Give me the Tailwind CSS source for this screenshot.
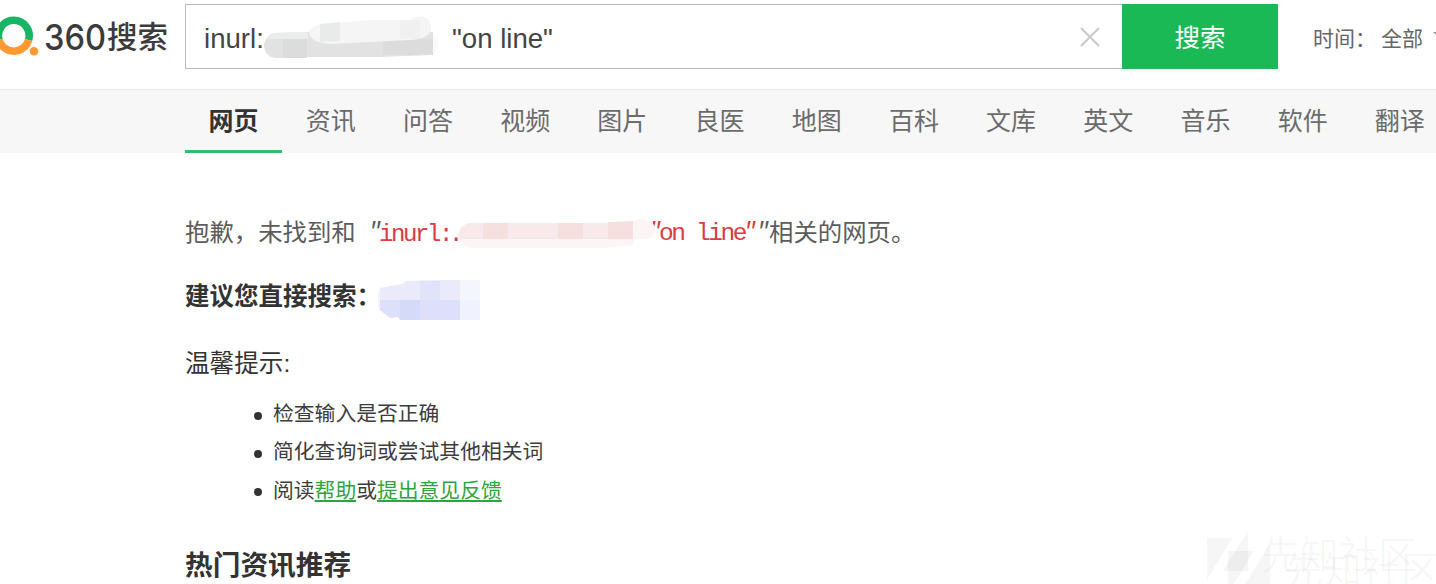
<!DOCTYPE html>
<html lang="zh-CN">
<head>
<meta charset="utf-8">
<title>360搜索</title>
<script src="https://cdn.jsdelivr.net/npm/@tailwindcss/browser@4"></script>
</head>
<body class="relative h-[584px] w-[1436px] overflow-hidden bg-white font-['Liberation_Sans','Noto_Sans_CJK_SC',sans-serif] text-[#333]">
<header class="flex h-[89px] pt-1">
  <a class="block h-[65px] w-[185px] shrink-0">
    <svg width="185" height="65" viewBox="0 4 185 65">
      <path d="M-1 40A15.4 15.4 0 1 1 28.6 40" fill="none" stroke="#19b566" stroke-width="7.5"/>
      <path d="M-1 40A15.4 15.4 0 0 0 28.6 40" fill="none" stroke="#ff9a33" stroke-width="7.5"/>
      <circle cx="34" cy="51.3" r="4.3" fill="#ff9a33"/>
      <text x="44" y="50" font-family="Inter" font-size="35" font-weight="500" textLength="62" lengthAdjust="spacingAndGlyphs" fill="#3b3b3b">360</text>
      <text x="107" y="48" font-family="Noto Sans CJK SC" font-size="30.5" font-weight="500" textLength="61" fill="#3b3b3b">搜索</text>
    </svg>
  </a>
  <div class="flex h-[65px] w-[937px] shrink-0 items-center border border-r-0 border-[#bbb] pl-[18px] text-[27.6px] leading-[65px] text-[#444]">
    <span class="w-[60px] whitespace-nowrap pt-1">inurl:</span>
    <svg class="shrink-0" width="180" height="63" viewBox="264 5 180 63">
      <path d="M264 44Q267 34 275 33L308 32H433V55L380 57L305 57L302 58H275Q264 56 264 44Z" fill="#e2e2e2"/>
      <path d="M283 39H307V58H283ZM383 39H433V55H383Z" fill="#dcdcdc"/>
      <path d="M275 33L308 32V39H267Q270 34 275 33Z" fill="#ebecec"/>
      <path d="M309 33Q312 25 323 24L373 20L410 20Q420 13 428 19Q434 25 429 34Q421 40 410 40L330 44Q311 43 309 33Z" fill="#f5f5f5"/>
      <path d="M320 24L340 22V41L320 42Z" fill="#e9ebea"/>
      <path d="M400 20H420V39H400Z" fill="#f0f0f0"/>
      <path d="M433 33L438 40Q439 50 433 54Z" fill="#fafafa"/>
    </svg>
    <span class="ml-[8px] whitespace-nowrap pt-1">"on line"</span>
    <svg class="ml-auto mr-[22px]" width="20" height="20" viewBox="0 0 20 20"><path d="M1 1L19 19M19 1L1 19" stroke="#c8c8c8" stroke-width="1.9"/></svg>
  </div>
  <button class="h-[65px] w-[156px] shrink-0 bg-[#1bb955] pt-1 text-[25.5px] text-white">搜索</button>
  <div class="flex h-[65px] shrink-0 items-center pl-[35px] pt-[2px] font-['Noto_Sans_CJK_SC',sans-serif] text-[21px] text-[#666]">
    <span class="w-[68px] whitespace-nowrap">时间：</span><span class="w-[52px]">全部</span>
    <svg class="mb-1 shrink-0" width="12" height="7"><path d="M0 0H12L6 6Z" fill="#999"/></svg>
  </div>
</header>
<nav class="flex h-16 border-t border-[#e9e9e9] bg-[#f7f7f7] pl-[185px] text-center text-[25px] leading-[62px] text-[#6b6b6b] [&>a]:w-[97.2px] [&>a]:shrink-0">
  <a class="border-b-[3px] border-[#30c069] font-bold text-[#333]">网页</a><a>资讯</a><a>问答</a><a>视频</a><a>图片</a><a>良医</a><a>地图</a><a>百科</a><a>文库</a><a>英文</a><a>音乐</a><a>软件</a><a>翻译</a>
</nav>
<main class="flex flex-col pl-[185px]">
  <p class="mt-[60px] flex h-10 items-center whitespace-nowrap text-[24.4px] text-[#5c5c5c]">
    <span class="w-[183px]">抱歉，未找到和</span>
    <span class="w-[11px] font-['Liberation_Mono'] text-[23px] italic">"</span>
    <span class="w-[79px] pt-[3px] font-['Liberation_Mono'] text-[24px] tracking-[-2.4px] text-[#dc3b40]">inurl:<span class="-ml-[2px]">.</span></span>
    <svg class="relative z-10 shrink-0" width="198" height="40" viewBox="458 213 198 40">
      <path d="M458 235Q460 224 470 223H625L640 219L652 222Q658 229 652 238L633 240V245L605 248H470Q459 245 458 235Z" fill="#fcf5f5"/>
      <path d="M458 235Q460 224 470 223H625L633 221V239H459Z" fill="#f8eaea"/>
      <path d="M483 223H508V239H483ZM558 223H583V239H558ZM608 222L633 221V239H608Z" fill="#f5dfdf"/>
    </svg>
    <span class="ml-[-8px] w-[11px] font-['Liberation_Mono'] text-[23px] italic text-[#dc3b40]">"</span>
    <span class="w-[84px] pt-[3px] font-['Liberation_Mono'] text-[24.5px] tracking-[-2.4px] text-[#dc3b40]">on line</span>
    <span class="w-[13px] font-['Liberation_Mono'] text-[23px] italic text-[#dc3b40]">"</span>
    <span class="w-[13px] font-['Liberation_Mono'] text-[23px] italic">"</span>
    <span>相关的网页。</span>
  </p>
  <div class="mt-[24px] flex h-10 items-center text-[24.5px] font-bold">
    <h3 class="w-[193px] whitespace-nowrap pt-px">建议您直接搜索：</h3>
    <svg class="mt-[6px] shrink-0" width="102" height="40" viewBox="378 280 102 40">
      <path d="M380 288L390 286L402 284L406 281L440 280H480V300H380Z" fill="#eaeafb"/>
      <path d="M380 300H480V320H400L398 317L390 318L380 310Z" fill="#dedffa"/>
      <path d="M380 288Q374 299 380 311Z" fill="#f5f5f7"/>
      <path d="M420 281H440V300H420Z" fill="#e1e3fa"/><path d="M400 300H420V320H400Z" fill="#d6daf9"/>
      <path d="M460 280H480V300H460Z" fill="#f5f5fe"/><path d="M460 300H480V320H460Z" fill="#f0f3fe"/>
    </svg>
  </div>
  <h3 class="mt-[27px] h-10 whitespace-nowrap text-[24.6px] leading-[40px]">温馨提示:</h3>
  <ul class="mt-[11px] text-[20.8px] leading-[38.3px] text-[#3d3d3d] [&>li]:flex [&>li]:h-[38.3px] [&>li]:items-center [&>li]:pl-[69px]">
    <li><i class="mr-[11px] mt-[3px] size-[8px] rounded-full bg-[#333]"></i><span>检查输入是否正确</span></li>
    <li><i class="mr-[11px] mt-[3px] size-[8px] rounded-full bg-[#333]"></i><span>简化查询词或尝试其他相关词</span></li>
    <li><i class="mr-[11px] mt-[3px] size-[8px] rounded-full bg-[#333]"></i><span>阅读<a class="text-[#2ba63e] underline decoration-[1.5px] underline-offset-[2px]">帮助</a>或<a class="text-[#2ba63e] underline decoration-[1.5px] underline-offset-[2px]">提出意见反馈</a></span></li>
  </ul>
  <h2 class="mt-[36px] h-10 text-[27.7px] font-bold leading-[40px]">热门资讯推荐</h2>
</main>
<svg class="absolute bottom-0 right-0" width="236" height="56" viewBox="1200 528 236 56" font-family="Noto Sans CJK SC" font-weight="400" font-size="39">
  <g fill="#000" fill-opacity=".035">
    <path d="M1207 538H1232L1207 580Z"/><path d="M1223 571L1248 531V571Z"/>
    <path d="M1228 551H1254L1234 584H1228Z"/><path d="M1245 584L1270 544V584Z"/>
    <text x="1261" y="569">先知社区</text><text x="1284" y="584">先知社区</text>
  </g>
</svg>
</body>
</html>
